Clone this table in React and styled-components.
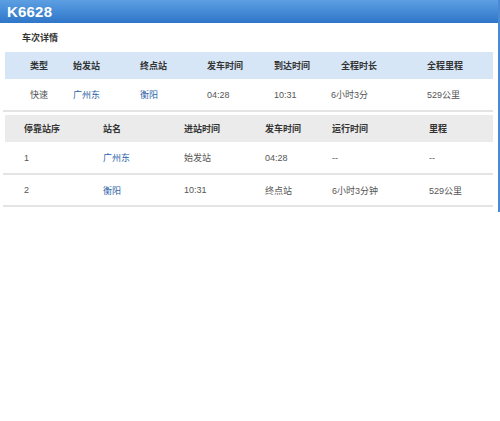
import React from 'react';
import styled, { createGlobalStyle } from 'styled-components';

const GlobalStyle = createGlobalStyle`
  html, body {
    margin: 0;
    padding: 0;
    background: #fff;
  }
  body {
    font-family: "Liberation Sans", "Noto Sans CJK SC", sans-serif;
  }
`;

const Panel = styled.div`
  width: 498px;
  height: 212px;
  border-right: 2px solid #4a8ad4;
  background: #fff;
`;

const TitleBar = styled.div`
  height: 23px;
  display: flex;
  align-items: center;
  padding-left: 7px;
  background: linear-gradient(#5c9fe2, #2f76c9);
  color: #fff;
  font-size: 15px;
  font-weight: bold;
  letter-spacing: 0.2px;
`;

const SectionTitle = styled.div`
  height: 29px;
  display: flex;
  align-items: center;
  padding-left: 22px;
  font-size: 9px;
  font-weight: bold;
  color: #333;
`;

const Row = styled.div`
  display: grid;
  grid-template-columns: ${(p) => p.cols};
  margin-left: 5px;
  width: 488px;
  height: ${(p) => p.h}px;
  align-items: center;
  background: ${(p) => p.bg || 'transparent'};
  font-size: 9px;
  color: #555;
`;

const Cell = styled.div`
  padding-left: ${(p) => p.pad || 0}px;
  font-weight: ${(p) => (p.head ? 'bold' : 'normal')};
  color: ${(p) => (p.head ? '#333' : p.link ? '#2a62a8' : '#555')};
  white-space: nowrap;
`;

const Divider = styled.div`
  margin-left: 3px;
  width: 490px;
  height: 2px;
  background: #e4e4e4;
`;

const Gap = styled.div`
  height: ${(p) => p.h}px;
`;

const cols1 = '68px 67px 67px 67px 57px 96px 66px';
const cols2 = '98px 81px 81px 67px 97px 64px';

const summaryHead = ['类型', '始发站', '终点站', '发车时间', '到达时间', '全程时长', '全程里程'];
const summaryData = [
  { t: '快速' },
  { t: '广州东', link: true },
  { t: '衡阳', link: true },
  { t: '04:28' },
  { t: '10:31' },
  { t: '6小时3分' },
  { t: '529公里' },
];

const stopHead = ['停靠站序', '站名', '进站时间', '发车时间', '运行时间', '里程'];
const stops = [
  ['1', '广州东', '始发站', '04:28', '--', '--'],
  ['2', '衡阳', '10:31', '终点站', '6小时3分钟', '529公里'],
];

export default function App() {
  return (
    <>
      <GlobalStyle />
      <Panel>
        <TitleBar>K6628</TitleBar>
        <SectionTitle>车次详情</SectionTitle>
        <Row cols={cols1} h={27} bg="#d6e6f7">
          {summaryHead.map((h, i) => (
            <Cell key={h} head pad={i === 0 ? 25 : i === 5 ? 10 : 0}>
              {h}
            </Cell>
          ))}
        </Row>
        <Row cols={cols1} h={31}>
          {summaryData.map((d, i) => (
            <Cell key={i} link={d.link} pad={i === 0 ? 25 : 0}>
              {d.t}
            </Cell>
          ))}
        </Row>
        <Divider />
        <Gap h={3} />
        <Row cols={cols2} h={27} bg="#ebebeb">
          {stopHead.map((h, i) => (
            <Cell key={h} head pad={i === 0 ? 19 : 0}>
              {h}
            </Cell>
          ))}
        </Row>
        {stops.map((s, r) => (
          <React.Fragment key={r}>
            <Row cols={cols2} h={r === 0 ? 31 : 30}>
              {s.map((v, i) => (
                <Cell key={i} link={i === 1} pad={i === 0 ? 19 : 0}>
                  {v}
                </Cell>
              ))}
            </Row>
            <Divider />
          </React.Fragment>
        ))}
      </Panel>
    </>
  );
}
